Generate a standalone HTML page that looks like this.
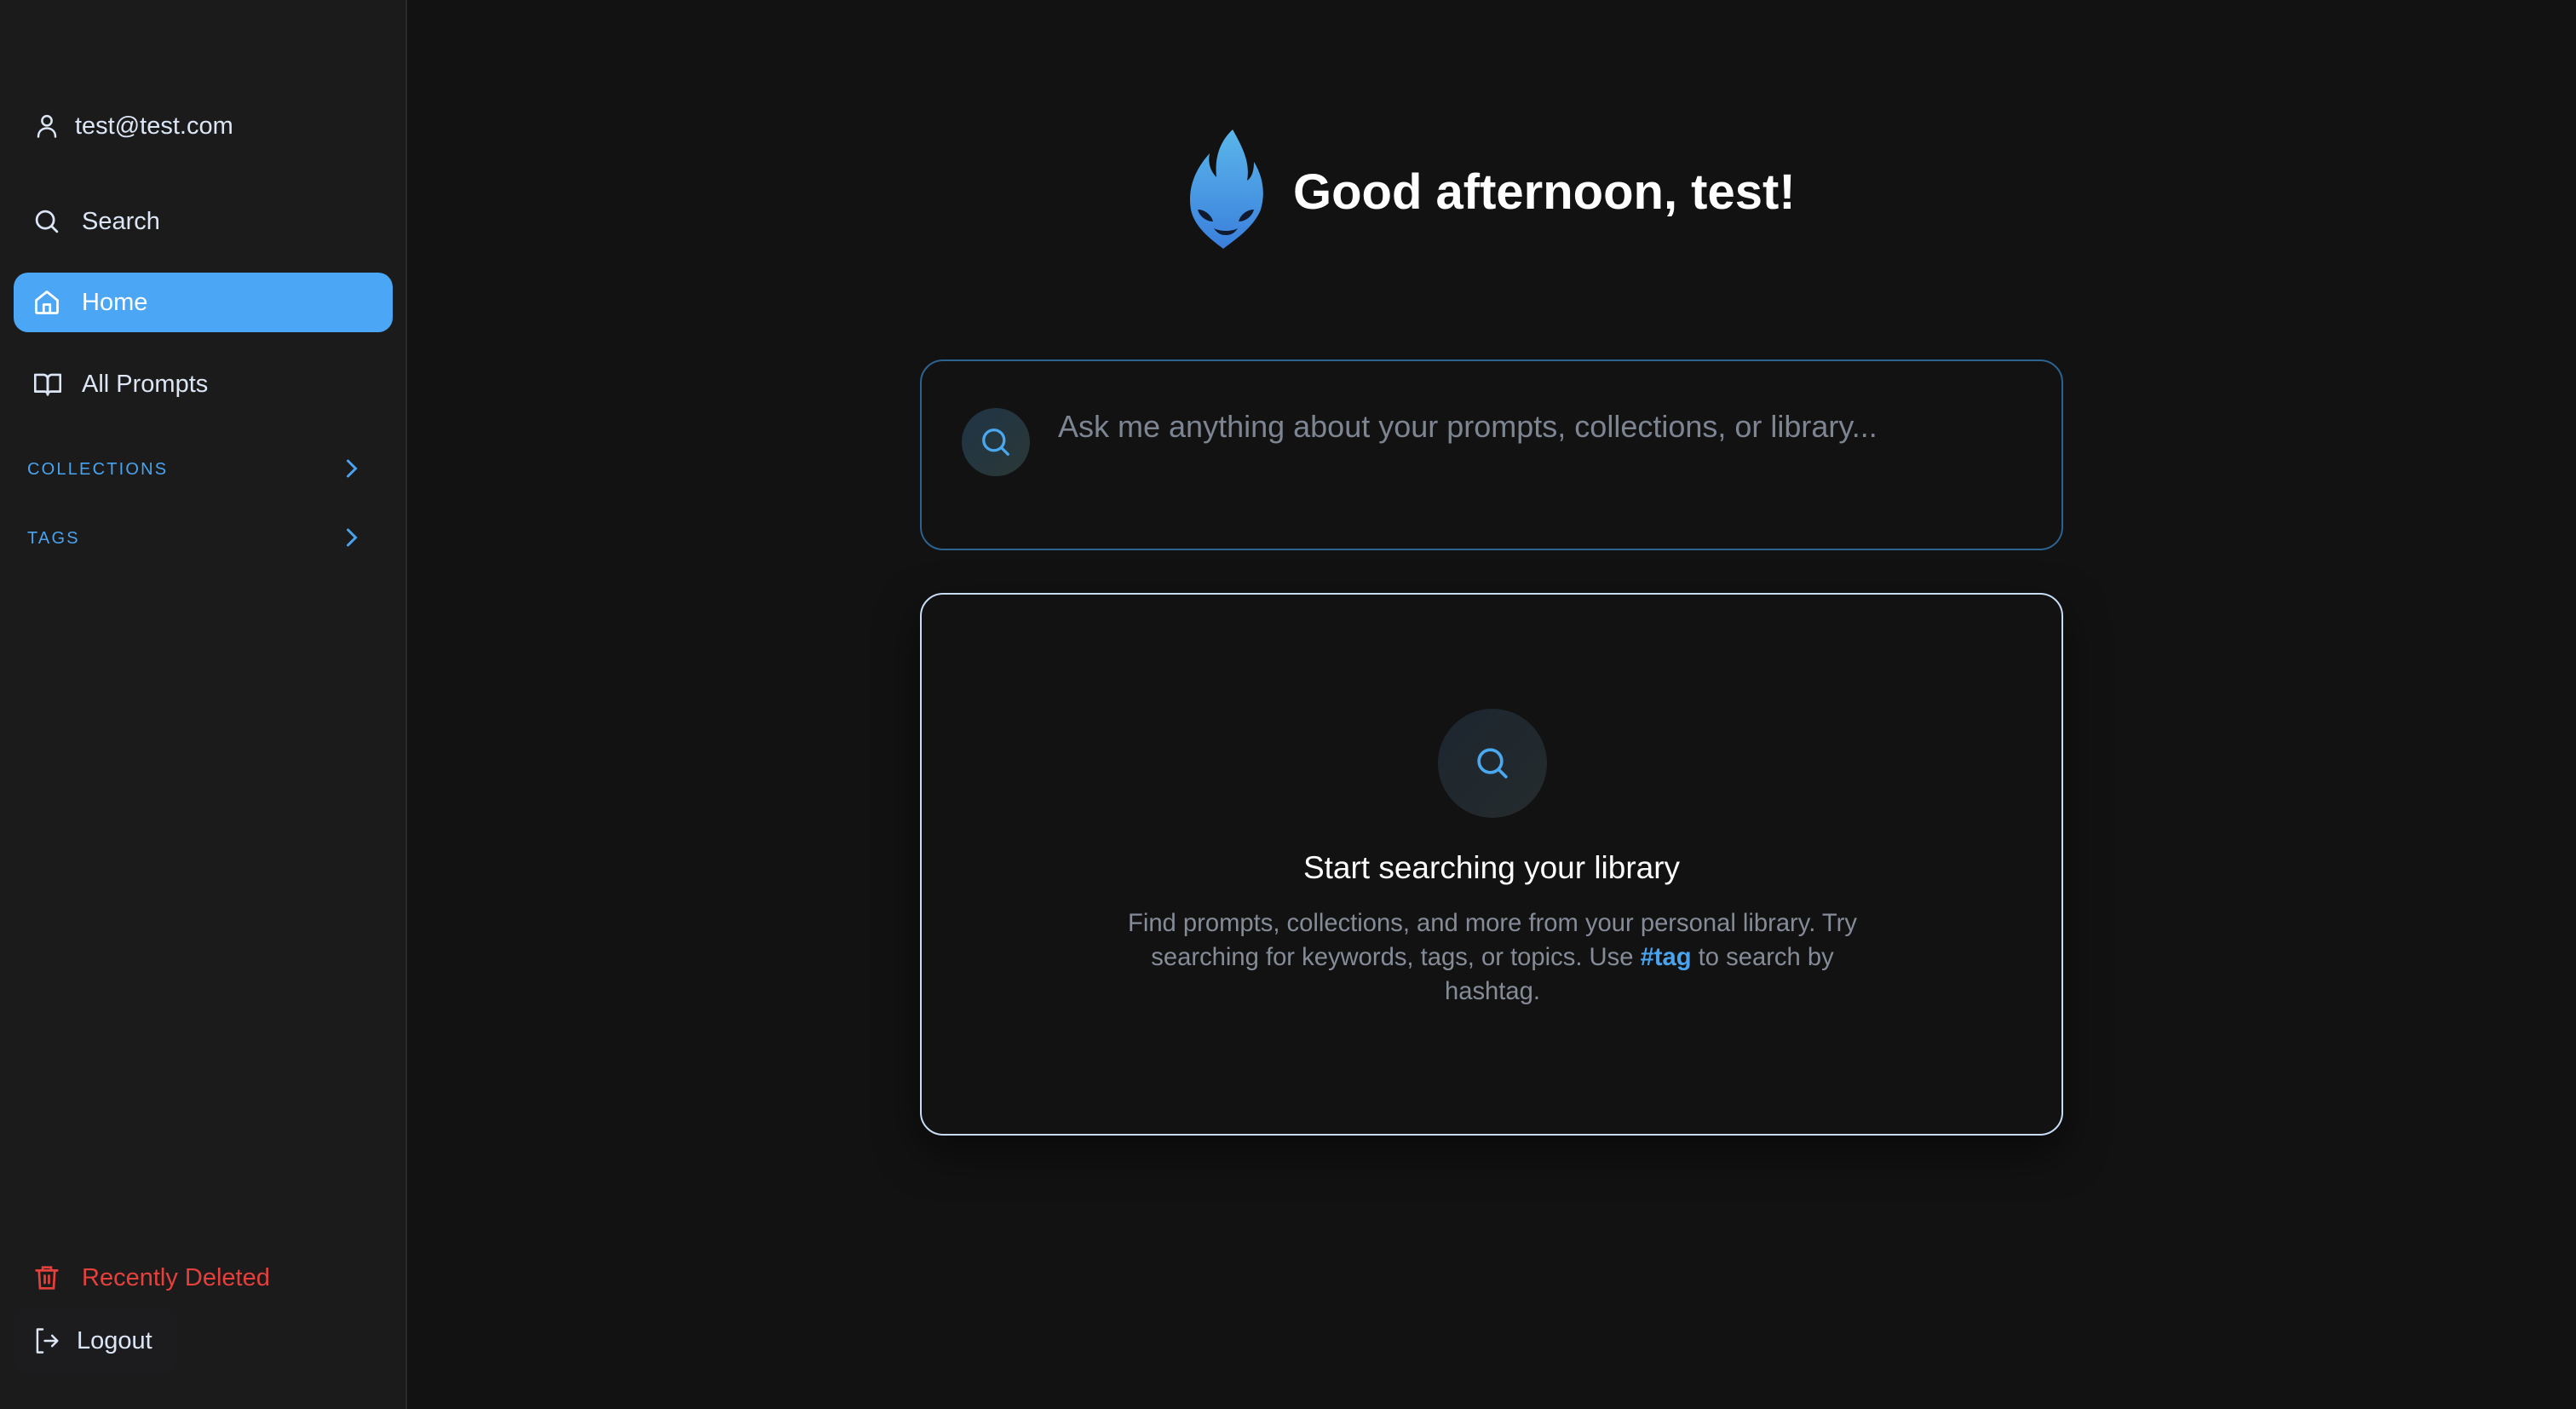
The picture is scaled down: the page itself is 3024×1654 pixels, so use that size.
<!DOCTYPE html>
<html><head><meta charset="utf-8"><style>
*{margin:0;padding:0;box-sizing:border-box}
body{width:3024px;height:1654px;background:#121212;font-family:"Liberation Sans",sans-serif;position:relative;overflow:hidden;color:#dfe6f2}
.sb{position:absolute;left:0;top:0;width:478px;height:1654px;background:#1b1b1c;border-right:2px solid #2a2a2c}
.it{position:absolute;left:0;display:flex;align-items:center;font-size:29px;color:#dce6f5}
.it svg{position:absolute;left:40px}
.it span{position:absolute;left:96px;white-space:nowrap}
.home{position:absolute;left:16px;top:320px;width:445px;height:70px;background:#4ba6f5;border-radius:17px}
.sec{position:absolute;left:32px;font-size:20px;letter-spacing:2.2px;color:#4aa3ee}
.chev{position:absolute;left:404px}
.box{position:absolute;left:1080px;top:422px;width:1342px;height:224px;border:2px solid #2c6391;border-radius:27px}
.card{position:absolute;left:1080px;top:696px;width:1342px;height:637px;border:2px solid #c9dcf5;border-radius:27px;box-shadow:0 20px 50px rgba(0,0,0,.5)}
</style></head><body>
<div class="sb">
 <div class="it" style="top:130px;height:36px">
  <svg width="30" height="32" viewBox="0 0 24 24" fill="none" stroke="#dce6f5" stroke-width="2" stroke-linecap="round"><circle cx="12" cy="7" r="4.5"/><path d="M4 22c0-5 3.5-8 8-8s8 3 8 8"/></svg>
  <span style="left:88px">test@test.com</span></div>
 <div class="it" style="top:242px;height:36px">
  <svg width="30" height="30" viewBox="0 0 24 24" fill="none" stroke="#dce6f5" stroke-width="2.2" stroke-linecap="round"><circle cx="10.5" cy="10.5" r="8"/><path d="M16.5 16.5l5 5"/></svg>
  <span>Search</span></div>
 <div class="home"></div>
 <div class="it" style="top:337px;height:36px;color:#fff">
  <svg width="30" height="30" viewBox="0 0 24 24" fill="none" stroke="#fff" stroke-width="2.2" stroke-linejoin="round"><path d="M2 10L12 2l10 8v11a1 1 0 0 1-1 1H3a1 1 0 0 1-1-1z"/><path d="M9 22v-8h6v8"/></svg>
  <span>Home</span></div>
 <div class="it" style="top:433px;height:36px">
  <svg width="32" height="28" viewBox="0 0 26 22" fill="none" stroke="#dce6f5" stroke-width="2.2" stroke-linejoin="round"><path d="M1 2h8a4 4 0 0 1 4 4v15a3 3 0 0 0-3-3H1z"/><path d="M25 2h-8a4 4 0 0 0-4 4v15a3 3 0 0 1 3-3h9z"/></svg>
  <span>All Prompts</span></div>
 <div class="sec" style="top:540px">COLLECTIONS</div>
 <svg class="chev" style="top:538px" width="18" height="24" viewBox="0 0 12 16" fill="none" stroke="#4aa3ee" stroke-width="2" stroke-linecap="round"><path d="M3 2l6 6-6 6"/></svg>
 <div class="sec" style="top:621px">TAGS</div>
 <svg class="chev" style="top:619px" width="18" height="24" viewBox="0 0 12 16" fill="none" stroke="#4aa3ee" stroke-width="2" stroke-linecap="round"><path d="M3 2l6 6-6 6"/></svg>
 <div class="it" style="top:1482px;height:36px;color:#e5403c">
  <svg width="30" height="32" viewBox="0 0 24 26" fill="none" stroke="#e5403c" stroke-width="2.2" stroke-linecap="round"><path d="M2 6h20M8 6V3h8v3M4.5 6l1 17h13l1-17M10 11v7M14 11v7"/></svg>
  <span>Recently Deleted</span></div>
 <div style="position:absolute;left:16px;top:1536px;width:192px;height:76px;background:#1c1c1f;border-radius:16px"></div>
 <div class="it" style="top:1556px;height:36px">
  <svg width="30" height="32" viewBox="0 0 24 26" fill="none" stroke="#dce6f5" stroke-width="2" stroke-linecap="round" stroke-linejoin="round"><path d="M8 2H3v22h5M10 13h12M17 8l5 5-5 5"/></svg>
  <span style="left:90px">Logout</span></div>
</div>

<svg style="position:absolute;left:1390px;top:150px" width="98" height="145" viewBox="0 0 98 145">
 <defs><linearGradient id="g" x1="0" y1="0" x2="0" y2="1"><stop offset="0" stop-color="#5ab6ea"/><stop offset="1" stop-color="#3a7fdc"/></linearGradient></defs>
 <path d="M57 2C40 18 36 38 38 58 30 50 28 40 30 30 12 50 4 72 8 96c4 20 22 34 38 46 16-12 36-26 44-46 6-20 2-40-8-56 0 10-2 18-8 22 4-22-6-40-17-60z" fill="url(#g)"/>
 <path d="M16 96c8 0 16 6 18 14-8 0-16-6-18-14zM82 96c-8 0-16 6-18 14 8 0 16-6 18-14z" fill="#0f1a2e"/>
 <path d="M35 118c8 4 20 4 28 0-4 6-8 8-14 8s-10-2-14-8z" fill="#0f1a2e"/>
</svg>
<div style="position:absolute;left:1518px;top:192px;font-size:58px;font-weight:bold;color:#fff;white-space:nowrap">Good afternoon, test!</div>

<div class="box">
 <div style="position:absolute;left:47px;top:55px;width:80px;height:80px;border-radius:50%;background:linear-gradient(135deg,#1f3446,#2b3836)"></div>
 <svg style="position:absolute;left:69px;top:77px" width="36" height="36" viewBox="0 0 24 24" fill="none" stroke="#4aa8f0" stroke-width="2.2" stroke-linecap="round"><circle cx="10.5" cy="10.5" r="8"/><path d="M16.5 16.5l5 5"/></svg>
 <div style="position:absolute;left:160px;top:56px;font-size:36px;color:#7d8592;white-space:nowrap">Ask me anything about your prompts, collections, or library...</div>
</div>

<div class="card">
 <div style="position:absolute;left:606px;top:134px;width:128px;height:128px;border-radius:50%;background:linear-gradient(135deg,#1c2630,#252b2c)"></div>
 <svg style="position:absolute;left:650px;top:178px" width="40" height="40" viewBox="0 0 24 24" fill="none" stroke="#4aa8f0" stroke-width="2.2" stroke-linecap="round"><circle cx="10.5" cy="10.5" r="8"/><path d="M16.5 16.5l5 5"/></svg>
 <div style="position:absolute;left:0;width:100%;top:300px;text-align:center;font-size:37px;color:#fff">Start searching your library</div>
 <div style="position:absolute;left:210px;width:920px;top:366px;text-align:center;font-size:29.2px;line-height:40px;color:#858c98">Find prompts, collections, and more from your personal library. Try searching for keywords, tags, or topics. Use <b style="color:#4aa3ee">#tag</b> to search by hashtag.</div>
</div>
</body></html>
